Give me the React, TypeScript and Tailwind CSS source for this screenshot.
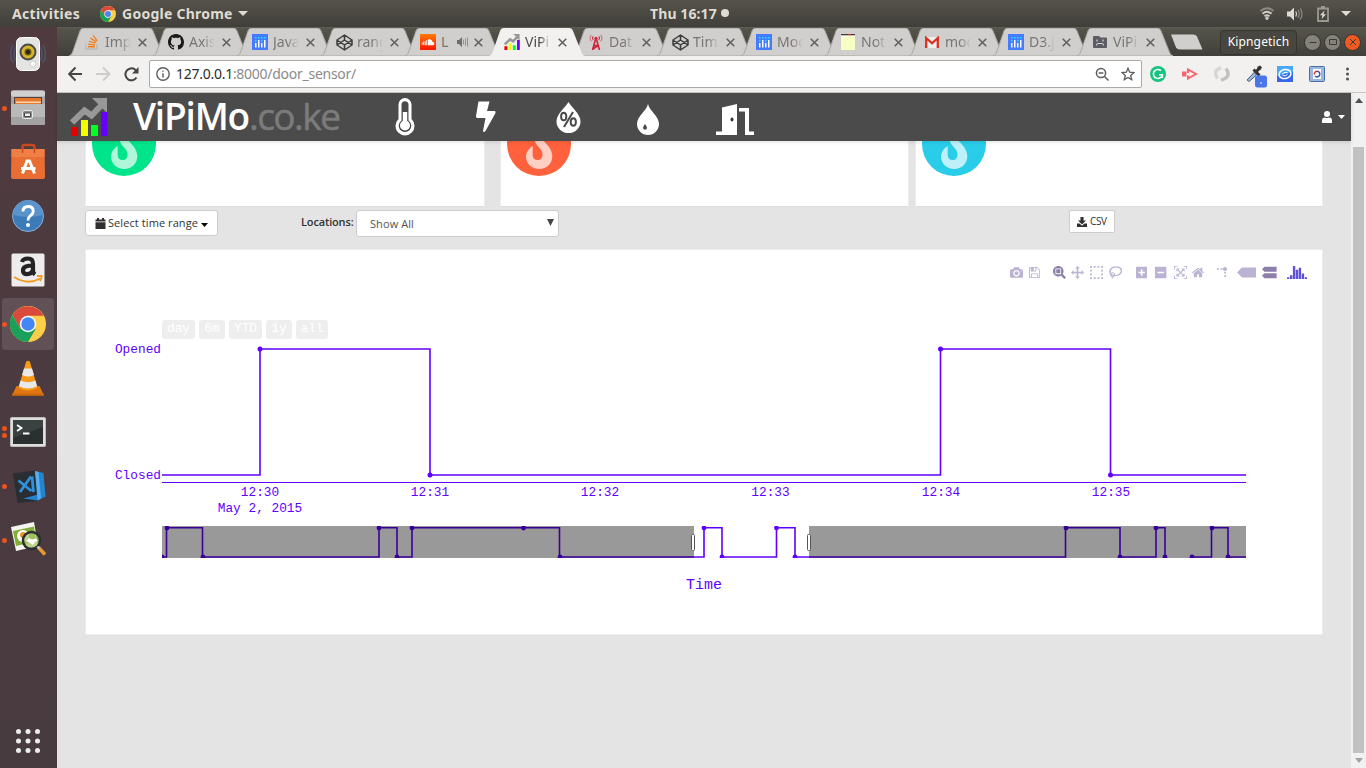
import React from "react";

type Kids = { children: React.ReactNode };

/* ---------- favicons ---------- */
const StackIcon = () => (
  <svg width="16" height="16" viewBox="0 0 16 16" fill="none">
    <path d="M2 9.5v5.5h11V9.5" stroke="#bcbbbb" strokeWidth="1.4" />
    <path d="M4 12.8h7M4.2 10.3l6.9.8M4.9 7.3l6.6 1.9M6.5 4.2l5.8 3.6M9.2 1.3l4 5.5" stroke="#f48024" strokeWidth="1.4" />
  </svg>
);
const GithubIcon = () => (
  <svg width="16" height="16" viewBox="0 0 16 16">
    <path fill="#1b1817" d="M8 0C3.58 0 0 3.58 0 8c0 3.54 2.29 6.53 5.47 7.59.4.07.55-.17.55-.38 0-.19-.01-.82-.01-1.49-2.01.37-2.53-.49-2.69-.94-.09-.23-.48-.94-.82-1.13-.28-.15-.68-.52-.01-.53.63-.01 1.08.58 1.23.82.72 1.21 1.87.87 2.33.66.07-.52.28-.87.51-1.07-1.78-.2-3.64-.89-3.64-3.95 0-.87.31-1.59.82-2.15-.08-.2-.36-1.02.08-2.12 0 0 .67-.21 2.2.82.64-.18 1.32-.27 2-.27s1.36.09 2 .27c1.53-1.04 2.2-.82 2.2-.82.44 1.1.16 1.92.08 2.12.51.56.82 1.27.82 2.15 0 3.07-1.87 3.75-3.65 3.95.29.25.54.73.54 1.48 0 1.07-.01 1.93-.01 2.2 0 .21.15.46.55.38A8.01 8.01 0 0 0 16 8c0-4.42-3.58-8-8-8z" />
  </svg>
);
const PlotlyIcon = () => (
  <svg width="16" height="16" viewBox="0 0 16 16">
    <path fill="#447bff" d="M0 0h16v16H0z" />
    <path fill="#fff" d="M3 9h1.5v4.500H3zM6 6h1.500v7.500H6zM9 9h1.500v4.500H9zM12 6h1.500v7.500H12z" />
    <path fill="#22e5f5" d="M3 3h1.500v1.500H3zM3 6h1.500v1.500H3zM6 3h1.500v1.500H6zM9 3h1.500v1.500H9zM9 6h1.500v1.500H9zM12 3h1.500v1.500H12z" />
  </svg>
);
const CodepenIcon = () => (
  <svg width="17" height="17" viewBox="0 0 17 17" fill="none" stroke="#3c3c3c" strokeWidth="1.5" strokeLinejoin="round">
    <path d="M8.500 1 16 6v5l-7.500 5L1 11V6zM8.500 1v5M8.500 11v5M1 6l7.500 5L16 6M1 11l7.500-5L16 11" />
  </svg>
);
const SoundcloudIcon = () => (
  <svg width="16" height="16" viewBox="0 0 16 16">
    <defs>
      <linearGradient id="sc" x1="0" y1="0" x2="0" y2="1"><stop offset="0" stopColor="#ff7a00" /><stop offset="1" stopColor="#ff1500" /></linearGradient>
    </defs>
    <path fill="url(#sc)" d="M0 0h16v16H0z" />
    <path fill="#fff" d="M8 5.500c2-1 4.300.2 4.600 2.500 2-.3 2.400 3 .3 3.200H8zM6.300 6h1v5.200h-1zM4.700 7h1v4.200h-1zM3.200 7.500h.9v3.600h-.9zM1.800 8.500h.8v2.200h-.8z" />
  </svg>
);
const VipimoIcon = ({ size = 16 }: { size?: number }) => (
  <svg width={size} height={size} viewBox="0 0 38 38">
    <path fill="none" stroke="#989898" strokeWidth="6" d="M2 24.500 14.500 12.500 21.500 17.500 33 5.500" />
    <path fill="#989898" d="M22 0h15v15z" />
    <path fill="#e60000" d="M1 29h7v9H1z" />
    <path fill="#f0ff00" d="M11 22h7v16h-7z" />
    <path fill="#0f2" d="M21 27h7v11h-7z" />
    <path fill="#60f" d="M31 14h6.500v24H31z" />
  </svg>
);
const TowerIcon = () => (
  <svg width="16" height="16" viewBox="0 0 16 16" fill="none" stroke="#cf2039">
    <path strokeWidth="1.600" d="M4.500 16 7.300 6h1.400l2.800 10M6 11.500h4M5 15l5-3.500" />
    <circle cx="8" cy="4.200" r="1.500" fill="#cf2039" stroke="none" />
    <path d="M5.200 2.300a3 3 0 0 0 0 3.800M10.800 2.300a3 3 0 0 1 0 3.800" strokeWidth="1.100" />
    <path d="M3.200 1a5 5 0 0 0 0 6.400M12.800 1a5 5 0 0 1 0 6.400" strokeWidth=".9" strokeOpacity=".7" />
  </svg>
);
const NoteIcon = () => (
  <svg width="16" height="16" viewBox="0 0 16 16">
    <path fill="#f8ffc4" d="M1 2h14v14H1z" />
    <path fill="#443a35" d="M1 0h14v1.500H1z" />
    <path fill="#b53a30" d="M8 0h3v1.500H8z" />
    <path fill="#fff" d="M1 1.500h14v1H1z" />
  </svg>
);
const GmailIcon = () => (
  <svg width="16" height="16" viewBox="0 0 16 16">
    <path fill="#eee" d="M1 3h14v11H1z" />
    <path fill="none" stroke="#d9301f" strokeWidth="2.300" d="M2.200 14V4L8 9.300 13.800 4v10" />
  </svg>
);
const SadFolderIcon = () => (
  <svg width="16" height="16" viewBox="0 0 16 16">
    <path fill="#5c5c64" d="M1 3q0-1 1-1h5l1.500 1.500H14q1 0 1 1V13q0 1-1 1H2q-1 0-1-1z" />
    <path stroke="#d4d4d8" strokeWidth="1.200" fill="none" d="M5 5.500v2M11 5.500v2M4.500 11.500q0-2 1.500-2h4q1.500 0 1.500 2" />
  </svg>
);

const tabs: { icon: React.ReactNode; title: string; audio?: boolean; active?: boolean }[] = [
  { icon: <StackIcon />, title: "Imp" },
  { icon: <GithubIcon />, title: "Axis" },
  { icon: <PlotlyIcon />, title: "Java" },
  { icon: <CodepenIcon />, title: "rang" },
  { icon: <SoundcloudIcon />, title: "L", audio: true },
  { icon: <VipimoIcon />, title: "ViPi", active: true },
  { icon: <TowerIcon />, title: "Dat" },
  { icon: <CodepenIcon />, title: "Tim" },
  { icon: <PlotlyIcon />, title: "Mod" },
  { icon: <NoteIcon />, title: "Not" },
  { icon: <GmailIcon />, title: "mod" },
  { icon: <PlotlyIcon />, title: "D3.j" },
  { icon: <SadFolderIcon />, title: "ViPi" },
];

const Tab = ({ t }: { t: (typeof tabs)[number] }) => (
  <div className={t.active ? "relative z-10 -mr-3 h-7 w-24 shrink-0" : "relative -mr-3 h-7 w-24 shrink-0"}>
    <svg className="absolute inset-0" width="96" height="28" viewBox="0 0 96 28">
      <path d="M0 28 C2 27 3 26 4 23 L11 3 Q12 0 15 0 H80 Q83 0 84 3 L92 23 Q93 27 96 28z" fill={t.active ? "#f2f1f0" : "#d0cfcd"} stroke={t.active ? "none" : "#a9a8a4"} strokeWidth="1" />
    </svg>
    <div className="relative flex h-7 items-center pl-[15px]">
      <span className="flex w-[17px] shrink-0">{t.icon}</span>
      <span className={`mb-px ml-1 w-[26px] shrink-0 overflow-hidden whitespace-nowrap [mask-image:linear-gradient(90deg,#000_55%,transparent)] ${t.active ? "text-[#4a4a4a]" : "text-[#767676]"} ${t.audio ? "[mask-image:none]" : ""}`}>{t.title}</span>
      {t.audio && (
        <svg className="-ml-2.5 mr-[-2px] shrink-0" width="12" height="10" viewBox="0 0 12 10" fill="#6d6d6d">
          <path d="M0 3h2l3-3v10L2 7H0z" />
          <path d="M6.500 2.500v5M8.500 1.500v7M10.500 .5v9" stroke="#8a8a8a" strokeWidth=".9" />
        </svg>
      )}
      <svg className="ml-[7px] shrink-0" width="9" height="9" viewBox="0 0 9 9" stroke="#5f5f5f" strokeWidth="1.500"><path d="m.7.7 7.600 7.600M8.300.7.7 8.300" /></svg>
    </div>
  </div>
);

/* ---------- dock ---------- */
const ChromeLogo = ({ size }: { size: number }) => (
  <svg width={size} height={size} viewBox="0 0 36 36">
    <circle cx="18" cy="18" r="18" fill="#fdce47" />
    <path fill="#d94a3d" d="M2.400 9 10.200 22.500 18 9.800h15.700A18 18 0 0 0 2.400 9z" />
    <path fill="#19a05a" d="M2.400 9A18 18 0 0 0 18 36l8-13.400-8 3.600-8-4z" />
    <circle cx="18" cy="18" r="8.300" fill="#f4f6f8" />
    <circle cx="18" cy="18" r="6.700" fill="#4486f6" />
  </svg>
);
const S = ({ children }: Kids) => <svg width="38" height="38" viewBox="0 0 38 38">{children}</svg>;

const dock: { icon: React.ReactNode; dots: number; active?: boolean }[] = [
  {
    dots: 0,
    icon: (
      <S>
        <path d="M4 10Q-1 19 4 28M34 10Q39 19 34 28M6.500 12q-3 7 0 14M31.500 12q3 7 0 14" stroke="#51698d" strokeOpacity=".55" strokeWidth="1.500" fill="none" />
        <rect x="7.500" y="2.500" width="23" height="33" rx="5" fill="#e4e4e2" stroke="#fff" />
        <circle cx="19" cy="17" r="8.500" fill="#4a4a4a" />
        <circle cx="19" cy="17" r="6.500" fill="#d5b62c" />
        <circle cx="19" cy="17" r="3.500" fill="#6b5a10" />
        <circle cx="19" cy="17" r="2" fill="#222" />
        <circle cx="24" cy="29" r="3" fill="#fafafa" stroke="#ccc" />
      </S>
    ),
  },
  {
    dots: 1,
    icon: (
      <S>
        <rect x="2" y="1.500" width="34" height="34.500" rx="2" fill="#a6a6a6" />
        <rect x="2" y="1.500" width="34" height="6" rx="2" fill="#cfcfcf" />
        <path fill="#544038" d="M5 8h28v8H5z" />
        <path fill="#e8762c" d="M6 9h26v6H6z" />
        <path fill="#f7d7b0" d="M7 12.500h25v1.500H7z" />
        <path fill="#b9b9b9" d="M2 15h34v19q0 2-2 2H4q-2 0-2-2z" />
        <path fill="#a2a2a2" d="M2 28h34v6q0 2-2 2H4q-2 0-2-2z" />
        <rect x="13.500" y="21.500" width="10" height="8" rx="1.500" fill="#8b8b8b" stroke="#e8e8e8" />
        <path fill="#f2f2f2" stroke="#444" d="M15.500 24h6v3.500h-6z" />
      </S>
    ),
  },
  {
    dots: 0,
    icon: (
      <S>
        <path fill="none" stroke="#c9491f" strokeWidth="2.500" d="M13.500 10V4q0-2 2-2h8q2 0 2 2v6" />
        <path fill="#ea6e34" d="M2.500 6h33l.5 28q0 2-2 2H4q-2 0-2-2z" />
        <path fill="#f07f45" d="M2.500 6h33v8h-33z" />
        <path fill="none" stroke="#c9491f" strokeWidth="1.500" d="M13.500 6v4M25.500 6v4" />
        <path fill="none" stroke="#fff" strokeWidth="3" d="M13.500 30.500 18 18h2.500L25.500 30.500M12 25.500h14.500" />
      </S>
    ),
  },
  {
    dots: 0,
    icon: (
      <S>
        <circle cx="19" cy="19" r="15.500" fill="#3c7ab8" stroke="#88b2da" />
        <path d="M4 18a15 15 0 0 1 30 0Q19 22 4 18z" fill="#5b93cb" />
        <path d="M14 14.500q0-5 5.200-5 5 0 5 4.400 0 3-3 5-2.200 1.600-2.200 4.600" fill="none" stroke="#fff" strokeWidth="2.800" />
        <circle cx="19" cy="28" r="2" fill="#fff" />
      </S>
    ),
  },
  {
    dots: 0,
    icon: (
      <S>
        <rect x="2.500" y="2.500" width="33" height="33" rx="1.500" fill="#ededed" />
        <path fill="none" stroke="#242424" strokeWidth="4.200" d="M13 11q1-3.500 6-3.500 5 0 5 5v7q0 2.500 2 4M24 14.500q-10 0-10 5 0 3.700 4 3.700 5 0 6-5" />
        <path fill="none" stroke="#f39a20" strokeWidth="2" d="M5 26q14 8.500 26 1.500M28 25h4.500q.5 2-1.500 5" />
      </S>
    ),
  },
  { dots: 1, active: true, icon: <ChromeLogo size={36} /> },
  {
    dots: 0,
    icon: (
      <S>
        <path fill="#e1780f" d="M7.500 27h23l4.500 9.500H3z" />
        <path fill="#f79a1c" d="M17 3q2-2.500 4 0L28.500 29q-9.500 5-19 0z" />
        <path fill="#e8e8e8" d="m15 9.500 8 0 2 6.500q-6 3-12 0zM11.500 21.500q7.500 3.500 15 0l1.600 5.800q-9.100 4.400-18.200 0z" />
        <path fill="#d0680c" d="M3 34.500h32v2H3z" />
      </S>
    ),
  },
  {
    dots: 2,
    icon: (
      <S>
        <rect x="1.500" y="4.500" width="35" height="29" rx="1" fill="#dededd" stroke="#bbb" />
        <path fill="#2b2f30" d="M4 7h30v24H4z" />
        <path fill="#3b4041" d="M4 7h30v7L4 25z" />
        <path fill="none" stroke="#fff" strokeWidth="1.800" d="m8 12 4.500 3L8 18M14 20.500h6.500" />
      </S>
    ),
  },
  {
    dots: 1,
    icon: (
      <S>
        <path fill="#2a2d31" d="M4 6.500 26 3.500 29 34 8.500 36z" />
        <path fill="#2484cf" d="M26 4 34.500 6 36.500 29.500 29 33.500 14 31.500 29 27.500z" />
        <path fill="#55aef0" d="m26 4 3.500 1 2.500 26-3 2.500-1-6z" />
        <path fill="none" stroke="#2d91dd" strokeWidth="2.800" d="M9.500 13.500 22.500 24M22 9.500 11 25M23 9.500l1.500 15.500" />
      </S>
    ),
  },
  {
    dots: 1,
    icon: (
      <S>
        <path fill="#f5f5f0" d="m2 6 23-5 4 24-22 5z" />
        <path fill="#83ad36" d="m4 10 21-4.500 2 15L7 25z" />
        <circle cx="14" cy="15" r="6" fill="#fff" />
        <circle cx="14" cy="14" r="3" fill="#e9972a" />
        <circle cx="22.500" cy="19.500" r="8.500" fill="#a8c76c" fillOpacity=".75" stroke="#2c2e30" strokeWidth="2.500" />
        <path d="m17 20 3-3 3 1.500 4-1 2 2.500-3 1-2 3-3-2z" fill="#fff" />
        <path stroke="#e59a35" strokeWidth="3.500" d="m29.500 26.500 6.500 7" />
        <path stroke="#ccc" strokeWidth="2.500" d="m28.500 25.500 2 2.200" />
      </S>
    ),
  },
];

/* ---------- chart toolbar ---------- */
const modebar: { w: number; d: string; gap: string; cls: string; tf?: string }[] = [
  { w: 1000, gap: "ml-0", cls: "fill-[#bcb3d2]", d: "m500 450c-83 0-150-67-150-150 0-83 67-150 150-150 83 0 150 67 150 150 0 83-67 150-150 150z m400 150h-120c-16 0-34 13-39 29l-31 93c-6 15-23 28-40 28h-340c-16 0-34-13-39-28l-31-94c-6-15-23-28-40-28h-120c-55 0-100-45-100-100v-450c0-55 45-100 100-100h800c55 0 100 45 100 100v450c0 55-45 100-100 100z m-400-550c-138 0-250 112-250 250 0 138 112 250 250 250 138 0 250-112 250-250 0-138-112-250-250-250z m365 380c-19 0-35 16-35 35 0 19 16 35 35 35 19 0 35-16 35-35 0-19-16-35-35-35z" },
  { w: 857, gap: "ml-[6px]", cls: "fill-[#bcb3d2]", d: "m214-7h429v214h-429v-214z m500 0h72v500q0 8-6 21t-11 20l-157 156q-5 6-19 12t-22 5v-232q0-22-15-38t-38-16h-322q-22 0-37 16t-16 38v232h-72v-714h72v232q0 22 16 38t37 16h465q22 0 38-16t15-38v-232z m-214 518v178q0 8-5 13t-13 5h-107q-7 0-13-5t-5-13v-178q0-8 5-13t13-5h107q7 0 13 5t5 13z m357-18v-518q0-22-15-38t-38-16h-750q-23 0-38 16t-16 38v750q0 22 16 38t38 16h517q23 0 50-12t42-26l156-157q16-15 27-42t11-49z" },
  { w: 1000, gap: "ml-[13px]", cls: "fill-[#8c7fa9]", d: "m1000-25l-250 251c40 63 63 138 63 218 0 224-182 406-407 406-224 0-406-182-406-406s183-406 407-406c80 0 155 22 218 62l250-250 125 125z m-812 250l0 438 437 0 0-438-437 0z m62 375l313 0 0-312-313 0 0 312z" },
  { w: 1000, gap: "ml-[5.500px]", cls: "fill-[#bcb3d2]", d: "m1000 350l-187 188 0-125-250 0 0 250 125 0-188 187-187-187 125 0 0-250-250 0 0 125-188-188 186-187 0 125 252 0 0-250-125 0 187-188 188 188-125 0 0 250 250 0 0-126 187 188z" },
  { w: 1000, gap: "ml-[5.500px]", cls: "fill-[#bcb3d2]", d: "m0 850l0-143 143 0 0 143-143 0z m286 0l0-143 143 0 0 143-143 0z m285 0l0-143 143 0 0 143-143 0z m286 0l0-143 143 0 0 143-143 0z m-857-286l0-143 143 0 0 143-143 0z m857 0l0-143 143 0 0 143-143 0z m-857-285l0-143 143 0 0 143-143 0z m857 0l0-143 143 0 0 143-143 0z m-857-286l0-143 143 0 0 143-143 0z m286 0l0-143 143 0 0 143-143 0z m285 0l0-143 143 0 0 143-143 0z m286 0l0-143 143 0 0 143-143 0z" },
  { w: 1031, gap: "ml-[6px]", cls: "fill-[#bcb3d2]", d: "m1018 538c-36 207-290 336-568 286-277-48-473-256-436-463 10-57 36-108 76-151-13-66 11-137 68-183 34-28 75-41 114-42l-55-70 0 0c-2-1-3-2-4-3-10-14-8-34 5-45 14-11 34-8 45 4 1 1 2 3 2 5l0 0 113 140c16 11 31 24 45 40 4 3 6 7 8 11 48-3 100 0 151 9 278 48 473 255 436 462z m-624-379c-80 14-149 48-197 96 42 42 109 47 156 9 33-26 47-66 41-105z m-187-74c-19 16-33 37-39 60 50-32 109-55 174-68-42-25-95-24-135 8z m360 75c-34-7-69-9-102-8 8 62-16 128-68 170-73 59-175 54-244-5-9 20-16 40-20 61-28 159 121 317 333 354s407-60 434-217c28-159-121-318-333-355z" },
  { w: 875, gap: "ml-[14px]", cls: "fill-[#bcb3d2]", d: "m1 787l0-875 875 0 0 875-875 0z m687-500l-187 0 0-187-125 0 0 187-188 0 0 125 188 0 0 187 125 0 0-187 187 0 0-125z" },
  { w: 875, gap: "ml-[8px]", cls: "fill-[#bcb3d2]", d: "m0 788l0-876 875 0 0 876-875 0z m688-500l-500 0 0 125 500 0 0-125z" },
  { w: 1000, gap: "ml-[7px]", cls: "fill-[#bcb3d2]", d: "m250 850l-187 0-63 0 0-62 0-188 63 0 0 188 187 0 0 62z m688 0l-188 0 0-62 188 0 0-188 62 0 0 188 0 62-62 0z m-875-938l0 188-63 0 0-188 0-62 63 0 187 0 0 62-187 0z m875 188l0-188-188 0 0-62 188 0 62 0 0 62 0 188-62 0z m-125 188l-1 0-93-94-156 156 156 156 92-93 2 0 0 250-250 0 0-2 93-92-156-156-156 156 94 92 0 2-250 0 0-250 0 0 93 93 157-156-157-156-93 94 0 0 0-250 250 0 0 0-94 93 156 157 156-157-93-93 0 0 250 0 0 250z" },
  { w: 928.6, gap: "ml-[5.500px]", cls: "fill-[#bcb3d2]", d: "m786 296v-267q0-15-11-26t-25-10h-214v214h-143v-214h-214q-15 0-25 10t-11 26v267q0 1 0 2t0 2l321 264 321-264q1-1 1-4z m124 39l-34-41q-5-5-12-6h-2q-7 0-12 3l-386 322-386-322q-7-4-13-4-7 2-12 7l-35 41q-4 5-3 13t6 12l401 334q18 15 42 15t43-15l136-114v109q0 8 5 13t13 5h107q8 0 13-5t5-13v-227l122-102q5-5 6-12t-4-13z" },
  { w: 1000, gap: "ml-[12.500px]", cls: "fill-[#bcb3d2]", tf: "matrix(1.5 0 0 -1.5 0 850)", d: "M512 409c0-57-46-104-103-104-57 0-104 47-104 104 0 57 47 103 104 103 57 0 103-46 103-103z m-327-39l92 0 0 92-92 0z m-185 0l92 0 0 92-92 0z m370-186l92 0 0 93-92 0z m0-184l92 0 0 92-92 0z" },
  { w: 1500, gap: "ml-[7px]", cls: "fill-[#bcb3d2]", d: "m375 725l0 0-375-375 375-374 0-1 1125 0 0 750-1125 0z" },
  { w: 1125, gap: "ml-[6px]", cls: "fill-[#8c7fa9]", d: "m187 786l0 2-187-188 188-187 0 0 937 0 0 373-938 0z m0-499l0 1-187-188 188-188 0 0 937 0 0 376-938-1z" },
  { w: 1542, gap: "ml-[10px]", cls: "fill-[#5f50dc]", d: "m0-10h182v-140h-182v140z m228 146h183v-286h-183v286z m225 714h182v-1000h-182v1000z m225-285h182v-715h-182v715z m225 142h183v-857h-183v857z m231-428h182v-429h-182v429z m225-291h183v-138h-183v138z" },
];

const rangeButtons = [
  { x: 162, w: 33, t: "day" },
  { x: 199, w: 26, t: "6m" },
  { x: 229, w: 33, t: "YTD" },
  { x: 266, w: 26, t: "1y" },
  { x: 296, w: 32, t: "all" },
];
const ticks = [
  [260, "12:30"],
  [430, "12:31"],
  [600, "12:32"],
  [770.5, "12:33"],
  [941, "12:34"],
  [1111, "12:35"],
] as const;
const overviewDots = [
  [162, 557], [167, 528], [203, 557], [379, 528], [397, 557], [412, 528], [523.500, 528], [560, 557], [704, 528], [722, 557], [776.500, 528], [795, 557],
  [1066, 528], [1120, 557], [1156, 528], [1165, 557], [1192, 557], [1212, 528], [1228, 557],
];

const Chart = () => (
  <svg className="block font-['Liberation_Mono',monospace]" width="1236" height="340" viewBox="86 290 1236 340" fontSize="12.8" fill="#6000ff">
    {rangeButtons.map((b) => (
      <g key={b.t}>
        <rect x={b.x} y="320" width={b.w} height="19" rx="3" fill="#eee" />
        <text x={b.x + b.w / 2} y="332" textAnchor="middle" fill="#fff">{b.t}</text>
      </g>
    ))}
    <text x="161" y="353" textAnchor="end">Opened</text>
    <text x="161" y="479" textAnchor="end">Closed</text>
    <path fill="none" stroke="#6000ff" strokeWidth="1.600" d="M162 475H260V349H430V475H940.500V349H1110.500V475H1246" />
    <path stroke="#6000ff" d="M162 482.500H1246" />
    <circle cx="260" cy="349" r="2.500" /><circle cx="430" cy="475" r="2.500" />
    <circle cx="940.500" cy="349" r="2.500" /><circle cx="1110.500" cy="475" r="2.500" />
    {ticks.map(([x, t]) => <text key={t} x={x} y="496" textAnchor="middle">{t}</text>)}
    <text x="260" y="512" textAnchor="middle">May 2, 2015</text>
    <svg x="162" y="526" width="1084" height="32" viewBox="162 526 1084 32">
      <path fill="none" stroke="#6000ff" strokeWidth="1.600" d="M162 557H166.500V527.700H202.500V557H379V527.700H397V557H412V527.700H559.500V557H704V527.700H722V557H776.500V527.700H795V557H1065.500V527.700H1120V557H1156V527.700H1165V557M1192 557H1211.500V527.700H1228V557H1246" />
      {overviewDots.map(([x, y]) => <circle key={x} cx={x} cy={y} r="2.400" />)}
      <path fill="#000" fillOpacity=".4" d="M162 526H694V558H162zM809 526H1246V558H809z" />
    </svg>
    <rect x="691.500" y="534.500" width="3" height="16" rx="1" fill="#fff" stroke="#555" />
    <rect x="807.500" y="534.500" width="3" height="16" rx="1" fill="#fff" stroke="#555" />
    <text x="704" y="589" textAnchor="middle" fontSize="15">Time</text>
  </svg>
);

const Flame = ({ color, flame }: { color: string; flame: string }) => (
  <svg className="block" width="64" height="36" viewBox="0 32 64 36">
    <circle cx="32" cy="35" r="32" fill={color} />
    <path fill={flame} d="M28 32C29 37 35.500 39.500 35.500 45.500 35.500 49 33.500 51 30.700 51 27.500 51 25.700 49 25.700 46V37C21.500 39.500 19 43.500 19 48 19 54.500 25 60 32.300 60 39.500 60 45.300 54.500 45.300 47.500 45.300 41 41 36 36.500 32z" />
  </svg>
);

const NavIcon = ({ w, ml, children }: { w: number; ml: string; children: React.ReactNode }) => (
  <svg className={ml} width={w} height="48" viewBox={`0 93 ${w} 48`} fill="#fff">{children}</svg>
);

export default function App() {
  return (
    <div className="flex h-[768px] w-[1366px] flex-col overflow-hidden bg-[#e4e4e4] font-['Noto_Sans',sans-serif]">
      {/* desktop panel */}
      <div className="flex h-[27px] shrink-0 items-center bg-linear-to-b from-[#56534b] to-[#403f3a] text-[14px] font-bold text-[#dfdbd2]">
        <span className="ml-3 w-[68px] whitespace-nowrap tracking-[0.300px]">Activities</span>
        <span className="ml-5 flex w-4"><ChromeLogo size={16} /></span>
        <span className="ml-[6px] w-[111px] whitespace-nowrap tracking-[0.250px]">Google Chrome</span>
        <svg className="ml-[5px]" width="10" height="5" viewBox="0 0 10 5" fill="#dfdbd2"><path d="M0 0h10L5 5z" /></svg>
        <span className="ml-[402px] w-[68px] whitespace-nowrap pb-px tracking-[0.100px]">Thu 16:17</span>
        <span className="mb-px ml-[3px] size-2 rounded-full bg-[#dfdbd2]" />
        <div className="ml-auto flex items-center pr-[15px]">
          <svg width="14" height="13" viewBox="0 0 14 13" fill="none" stroke="#cfccc4" strokeWidth="1.800">
            <path d="M.5 4q6.500-5.500 13 0" stroke="#8d8a82" /><path d="M2.500 6.700q4.500-3.800 9 0M4.500 9.200q2.500-2 5 0" /><circle cx="7" cy="11.300" r=".8" fill="#cfccc4" />
          </svg>
          <svg className="ml-[13px]" width="16" height="14" viewBox="0 0 16 14" fill="#dfdbd2">
            <path d="M0 4.500h3L7 .5v13l-4-4H0z" /><path fill="none" stroke="#dfdbd2" strokeWidth="1.200" d="M8.800 4.500q1.500 2.500 0 5" /><path fill="none" stroke="#8d8a82" strokeWidth="1.200" d="M11 3q2.500 4 0 8M13.200 1.500q3.500 5.500 0 11" />
          </svg>
          <svg className="ml-[14px]" width="12" height="16" viewBox="0 0 12 16" fill="none" stroke="#9b9890" strokeWidth="1.800">
            <path d="M1 2.500h10V15H1zM4 1h4" /><path d="M7.500 4.500 3 9.300h2.500l-1 4L9 8.200H6.500z" fill="#dfdbd2" stroke="none" />
          </svg>
          <svg className="ml-[12px]" width="10" height="5" viewBox="0 0 10 5" fill="#dfdbd2"><path d="M0 0h10L5 5z" /></svg>
        </div>
      </div>

      <div className="flex min-h-0 flex-1">
        {/* dock */}
        <div className="flex w-[57px] shrink-0 flex-col bg-linear-to-b from-[#4f3a3f] to-[#483b40]">
          {dock.map((d, i) => (
            <div key={i} className="relative flex h-[54px] w-[56px] shrink-0 items-center justify-center">
              {d.active && <span className="absolute inset-x-0.5 inset-y-px rounded-[3px] bg-white/12" />}
              <span className="absolute left-[2px] flex flex-col gap-[2px]">
                {Array.from({ length: d.dots }, (_, k) => <i key={k} className="size-[5px] rounded-full bg-[#e95420]" />)}
              </span>
              <span className="relative">{d.icon}</span>
            </div>
          ))}
          <svg className="mt-auto mb-[14px] ml-[15px]" width="26" height="26" viewBox="0 0 26 26" fill="#eee">
            {[3.500, 13, 22.500].map((y) => [3.500, 13, 22.500].map((x) => <circle key={`${x}-${y}`} cx={x} cy={y} r="2.500" />))}
          </svg>
        </div>

        <div className="flex min-w-0 flex-1 flex-col">
          {/* tab strip */}
          <div className="flex h-[29px] shrink-0 items-end border-t border-[#5e5c54] bg-linear-to-b from-[#56554b] to-[#403f3a] pl-3 text-[14px]">
            {tabs.map((t, i) => <Tab key={i} t={t} />)}
            <svg className="ml-[9px] self-center" width="34" height="16" viewBox="0 0 34 16"><path d="M1 .5h22q3 0 4 2l5.500 13H10q-3 0-4-2z" fill="#d0cfcd" /></svg>
            <div className="ml-auto flex items-center self-center pr-[5px]">
              <span className="mr-[4px] flex h-[25px] w-[77px] items-center justify-center rounded-[4px] border border-[#35342f] bg-[#474640] text-[12px] tracking-[0.150px] text-white">Kipngetich</span>
              {["bg-[#85827b]", "bg-[#85827b]", "bg-[#ee5a22]"].map((c, i) => (
                <span key={i} className={`ml-[3px] flex size-[17px] items-center justify-center rounded-full border border-[#35342f] ${c}`}>
                  <svg width="8" height="8" viewBox="0 0 8 8" fill="none" stroke="#3b3a36"><path d={["M.5 4.500h7", "M.5 1.500h7v5h-7z", "m1 1 6 6M7 1 1 7"][i]} /></svg>
                </span>
              ))}
            </div>
          </div>

          {/* toolbar */}
          <div className="flex h-[37px] shrink-0 items-center border-b border-[#c9c8c6] bg-[#f2f1f0]">
            <svg className="ml-[11px]" width="72" height="16" viewBox="0 0 72 16" fill="none" strokeWidth="2">
              <path stroke="#454545" d="M14 8H1.500M7.500 1.500 1.200 8l6.300 6.500" />
              <path stroke="#cecdcb" d="M28 8h13M35 1.500 41.500 8 35 14.500" />
              <path stroke="#454545" d="M68.500 11.500A6 6 0 1 1 67 3.500l2 2" />
              <path fill="#454545" d="M70.500 1v6.500H64z" />
            </svg>
            <div className="ml-[9px] flex h-[28px] w-[993px] items-center rounded-[2px] border border-[#a9a9a7] bg-white text-[14px] tracking-[-0.270px]">
              <svg className="ml-[6px]" width="14" height="14" viewBox="0 0 14 14" fill="none" stroke="#5c5c5c" strokeWidth="1.400"><circle cx="7" cy="7" r="6.200" /><path d="M7 6.200v4.300M7 3.400v1.400" /></svg>
              <span className="mb-px ml-[6px] text-[#2c2c2c]">127.0.0.1<span className="text-[#8a8a8a]">:8000/door_sensor/</span></span>
              <svg className="ml-auto" width="15" height="15" viewBox="0 0 15 15" fill="none" stroke="#5c5c5c" strokeWidth="1.500"><circle cx="6" cy="6" r="4.600" /><path d="m9.500 9.500 4 4M3.700 6h4.600" /></svg>
              <svg className="mx-[6px] ml-[11px]" width="14" height="14" viewBox="0 0 14 14" fill="none" stroke="#5c5c5c" strokeWidth="1.300"><path d="m7 1.200 1.700 4 4.300.4-3.300 2.800 1 4.200L7 10.400l-3.700 2.200 1-4.200L1 5.600l4.300-.4z" /></svg>
            </div>
            <svg className="ml-2" width="16" height="16" viewBox="0 0 16 16"><circle cx="8" cy="8" r="8" fill="#15c47e" /><path fill="none" stroke="#fff" strokeWidth="1.600" d="M11 4.700A4.500 4.500 0 1 0 12.300 8.800H9M12.300 8v4" /></svg>
            <svg className="ml-4" width="16" height="12" viewBox="0 0 16 12"><path fill="#f6666c" d="M0 3.500h4.500v5H0z" /><path fill="none" stroke="#f6666c" strokeWidth="2" d="M6 5V1.500L14 6 6 10.500V7.500" /></svg>
            <svg className="ml-4" width="16" height="16" viewBox="0 0 16 16" fill="none"><path stroke="#d7d6d5" strokeWidth="3.500" d="M7 2Q-1.500 4 3.500 12.500" /><path stroke="#c3c2c1" strokeWidth="3.500" d="M12 2.500Q18 11 7 14" /></svg>
            <svg className="mt-1 ml-[15px]" width="22" height="24" viewBox="0 0 22 24">
              <path d="M2 16 9 8.500 11.500 11 4 17.500z" fill="#9dbbd9" stroke="#49627d" /><path d="m8.500 5.500 6 6M11 8l3.500-4" stroke="#333" strokeWidth="3" /><path d="m12 3 3-1.500 2 2-2 3z" fill="#333" />
              <rect x="10" y="11.500" width="12" height="12" rx="2.500" fill="#4a76ea" /><circle cx="16" cy="19" r=".8" fill="#fff" />
            </svg>
            <svg className="ml-[10px]" width="16" height="16" viewBox="0 0 16 16"><path fill="#3567e8" d="M0 0h16v16H0z" /><path fill="#4ba8f5" d="M0 0h16v6L0 10z" /><ellipse cx="8" cy="8" rx="6" ry="4.500" fill="none" stroke="#fff" strokeWidth="1.500" transform="rotate(-12 8 8)" /><path d="M5 8q3-2.500 5.500-1.500M5.500 9.500q3 1 5-1" stroke="#fff" fill="none" /></svg>
            <svg className="ml-4" width="16" height="16" viewBox="0 0 16 16"><rect x=".5" y=".5" width="15" height="15" rx="1" fill="#9cb8dc" stroke="#496ea6" /><path fill="#fff" d="M4 3h8v10H4z" /><path fill="none" stroke="#d83a3a" strokeWidth="1.500" d="M5.300 8.500A2.800 2.800 0 0 1 8 5.300" /><path fill="none" stroke="#3450b8" strokeWidth="1.500" d="M8 5.300A2.800 2.800 0 1 1 6 10" /></svg>
            <svg className="ml-5" width="4" height="14" viewBox="0 0 4 14" fill="#505050"><circle cx="2.500" cy="2" r="1.500" /><circle cx="2.500" cy="7" r="1.500" /><circle cx="2.500" cy="12" r="1.500" /></svg>
          </div>

          {/* viewport */}
          <div className="flex min-h-0 flex-1">
            <div className="flex w-[1294px] shrink-0 flex-col">
              <div className="relative z-10 flex h-12 shrink-0 items-center bg-[#4b4b4b] shadow-[0_1px_4px_rgba(0,0,0,0.13)]">
                <span className="ml-[13px] flex w-[38px]"><VipimoIcon size={38} /></span>
                <div className="mb-1 ml-[25px] w-[209px] whitespace-nowrap font-['Open_Sans',sans-serif] text-[37px] leading-none">
                  <span className="font-semibold tracking-[-1.200px] text-white">ViPiMo</span><span className="tracking-[-1.500px] text-[#7b7b7b] [-webkit-text-stroke:0.5px_#7b7b7b]">.co.ke</span>
                </div>
                <NavIcon w={20} ml="ml-[52.5px]">
                  <path fillRule="evenodd" d="M10 98a6.500 6.500 0 0 0-6.500 6.500V119a9.500 9.500 0 1 0 13 0V104.500A6.500 6.500 0 0 0 10 98zM10 101.300a3.500 3.500 0 0 1 3.500 3.500V120.500a6.300 6.300 0 1 1-7 0V104.800a3.500 3.500 0 0 1 3.500-3.500z" />
                  <path d="M7.800 112h4.400v9.500H7.800z" /><circle cx="10" cy="125.500" r="5" />
                </NavIcon>
                <NavIcon w={20} ml="ml-[61px]"><path d="M2.500 101.500h11l-2.500 9.500h7.500q1.500 0 1 2L9.500 131q-2 2-2.500 0L9.500 118H1q-1 0-1-2z" /></NavIcon>
                <NavIcon w={25} ml="ml-[60px]">
                  <path d="M12.500 102C16 108 24.500 114 24.500 121.500a12 11.500 0 0 1-24 0C.5 114 9 108 12.500 102z" />
                  <g fill="none" stroke="#4b4b4b" strokeWidth="2"><ellipse cx="7.700" cy="116.500" rx="2.600" ry="3.800" /><ellipse cx="17.300" cy="122" rx="2.600" ry="3.800" /><path d="M17 112 8 127" /></g>
                </NavIcon>
                <NavIcon w={24} ml="ml-[55px]">
                  <path d="M12 104C13.500 111 23 116 23 124a11 11 0 0 1-22 0C1 116 10.500 111 12 104z" />
                  <path fill="#4b4b4b" d="M9 124q2 2.500 2 3.700a2 2 0 0 1-4 0q0-1.200 2-3.700z" />
                </NavIcon>
                <NavIcon w={38} ml="ml-[56px]">
                  <path d="M0 131.500h6V107.500L21 104v31H0zM23 108h10v23.500h5.500v3.500H29v-23.500h-6z" /><ellipse cx="16" cy="119.500" rx="1.500" ry="2" fill="#333" />
                </NavIcon>
                <svg className="ml-auto" width="10" height="12" viewBox="0 0 10 12" fill="#fff"><circle cx="5" cy="3" r="3" /><path d="M0 12V9.500Q0 6.500 3 6.500 5 7.500 7 6.500q3 0 3 3V12z" /></svg>
                <svg className="mr-[6px] ml-[6px]" width="7" height="4" viewBox="0 0 7 4" fill="#fff"><path d="M0 0h7L3.500 4z" /></svg>
              </div>

              <div className="flex h-[66px] shrink-0 pl-7">
                <div className="w-[400px] border-x border-b border-[#ececec] border-b-[#dcdcdc] bg-white pl-[6px]"><Flame color="#00e58b" flame="#b0f6da" /></div>
                <div className="ml-[15px] w-[409px] border-x border-b border-[#ececec] border-b-[#dcdcdc] bg-white pl-[6px]"><Flame color="#ff613c" flame="#ffcfc4" /></div>
                <div className="ml-[6px] w-[408px] border-x border-b border-[#ececec] border-b-[#dcdcdc] bg-white pl-[6px]"><Flame color="#29cdea" flame="#bdf0f9" /></div>
              </div>

              <div className="flex h-[42px] shrink-0 items-start pt-[3px] pl-7 font-['Open_Sans',sans-serif] text-[11px] text-[#333]">
                <div className="flex h-[26px] w-[133px] items-center rounded-[3px] border border-[#ccc] bg-white pl-[9px]">
                  <svg width="11" height="11" viewBox="0 0 11 11" fill="#2f2f2f"><path d="M.5 1.500h10V3.500H.5zM.5 4.200h10V11H.5zM2 0h2v2H2zM7 0h2v2H7z" /></svg>
                  <span className="ml-[2px] w-[92px] whitespace-nowrap tracking-[0.080px]">Select time range</span>
                  <svg className="ml-px mt-[3px]" width="7" height="4" viewBox="0 0 7 4"><path d="M0 0h7L3.500 4z" /></svg>
                </div>
                <span className="ml-[83px] flex h-6 w-[55px] items-center font-semibold tracking-[-0.150px]">Locations:</span>
                <div className="flex h-[27px] w-[203px] items-center rounded-[3px] border border-[#ccc] bg-white pl-[13px] text-[#555]">
                  <span className="mt-px tracking-[0.080px]">Show All</span>
                  <svg className="mr-1 mb-[3px] ml-auto" width="7" height="7" viewBox="0 0 7 7" fill="#444"><path d="M0 0h7L3.500 7z" /></svg>
                </div>
                <div className="ml-[510px] flex h-[23px] w-[46px] items-center rounded-[2px] border border-[#ccc] bg-white pl-[7px] text-[10px]">
                  <svg width="10" height="10" viewBox="0 0 10 10" fill="#2f2f2f"><path d="M3.500 0h3v3.500H9L5 7.500 1 3.500h2.500zM0 6.500h2.500L5 8.800l2.500-2.300H10V10H0z" /></svg>
                  <span className="ml-[3px] tracking-[-0.350px]">CSV</span>
                </div>
              </div>

              <div className="ml-7 h-[386px] w-[1238px] shrink-0 border border-[#ececec] bg-white">
                <div className="flex h-[40px] items-center justify-end pt-[5px] pr-[15px]">
                  {modebar.map((m, i) => (
                    <svg key={i} className={`${m.gap} ${m.cls} shrink-0`} width={m.w * 0.013} height="13" viewBox={`0 0 ${m.w} 1000`}>
                      <path transform={m.tf ?? "matrix(1 0 0 -1 0 850)"} d={m.d} />
                    </svg>
                  ))}
                </div>
                <Chart />
              </div>
            </div>

            {/* scrollbar */}
            <div className="flex flex-1 flex-col items-center bg-[#f1f1f1]">
              <svg className="mt-[5px] ml-[1px] shrink-0" width="8" height="5" viewBox="0 0 8 5" fill="#505050"><path d="M0 5h8L4 0z" /></svg>
              <div className="mt-[44px] h-[606px] w-[11px] shrink-0 bg-[#c1c1c1]" />
              <svg className="mt-[5px] ml-[1px] shrink-0" width="8" height="5" viewBox="0 0 8 5" fill="#a3a3a3"><path d="M0 0h8L4 5z" /></svg>
            </div>
          </div>
        </div>
      </div>
    </div>
  );
}
